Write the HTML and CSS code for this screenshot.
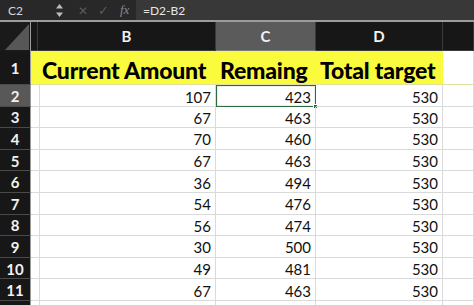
FILE: index.html
```html
<!DOCTYPE html>
<html lang="en">
<head>
    <meta charset="UTF-8">
    <title>Sheet</title>
    <link rel="stylesheet" href="styles.css">
</head>
<body>
    <div class="formula-bar">
        <div class="name-box">C2</div>
        <div class="stepper">
            <svg width="7" height="13" viewBox="0 0 7 13"><path d="M3.5 0 L7 4.5 L0 4.5 Z M3.5 13 L7 8.5 L0 8.5 Z" fill="#bdbdbd"/></svg>
        </div>
        <div class="fb-icon cancel">&#x2715;</div>
        <div class="fb-icon accept">&#x2713;</div>
        <div class="fb-icon fx">fx</div>
        <div class="formula">=D2-B2</div>
    </div>

    <div class="sheet">
        <div class="row head">
            <div class="corner"><span class="tri"></span></div>
            <div class="colhead"></div>
            <div class="colhead">B</div>
            <div class="colhead selected">C</div>
            <div class="colhead">D</div>
            <div class="colhead"></div>
        </div>
        <div class="row title">
            <div class="rownum">1</div>
            <div class="cell"></div>
            <div class="cell">Current Amount</div>
            <div class="cell">Remaing</div>
            <div class="cell">Total target</div>
            <div class="cell plain"></div>
        </div>
        <div class="row">
            <div class="rownum selected">2</div>
            <div class="cell"></div>
            <div class="cell num">107</div>
            <div class="cell num active">423<span class="handle"></span></div>
            <div class="cell num">530</div>
            <div class="cell"></div>
        </div>
        <div class="row">
            <div class="rownum">3</div><div class="cell"></div>
            <div class="cell num">67</div><div class="cell num">463</div><div class="cell num">530</div><div class="cell"></div>
        </div>
        <div class="row">
            <div class="rownum">4</div><div class="cell"></div>
            <div class="cell num">70</div><div class="cell num">460</div><div class="cell num">530</div><div class="cell"></div>
        </div>
        <div class="row">
            <div class="rownum">5</div><div class="cell"></div>
            <div class="cell num">67</div><div class="cell num">463</div><div class="cell num">530</div><div class="cell"></div>
        </div>
        <div class="row">
            <div class="rownum">6</div><div class="cell"></div>
            <div class="cell num">36</div><div class="cell num">494</div><div class="cell num">530</div><div class="cell"></div>
        </div>
        <div class="row">
            <div class="rownum">7</div><div class="cell"></div>
            <div class="cell num">54</div><div class="cell num">476</div><div class="cell num">530</div><div class="cell"></div>
        </div>
        <div class="row">
            <div class="rownum">8</div><div class="cell"></div>
            <div class="cell num">56</div><div class="cell num">474</div><div class="cell num">530</div><div class="cell"></div>
        </div>
        <div class="row">
            <div class="rownum">9</div><div class="cell"></div>
            <div class="cell num">30</div><div class="cell num">500</div><div class="cell num">530</div><div class="cell"></div>
        </div>
        <div class="row">
            <div class="rownum">10</div><div class="cell"></div>
            <div class="cell num">49</div><div class="cell num">481</div><div class="cell num">530</div><div class="cell"></div>
        </div>
        <div class="row">
            <div class="rownum">11</div><div class="cell"></div>
            <div class="cell num">67</div><div class="cell num">463</div><div class="cell num">530</div><div class="cell"></div>
        </div>
        <div class="row">
            <div class="rownum"></div><div class="cell"></div>
            <div class="cell num"></div><div class="cell num"></div><div class="cell num"></div><div class="cell"></div>
        </div>
    </div>
</body>
</html>
```

FILE: styles.css
```css
* {
    box-sizing: border-box;
}

body {
    margin: 0;
    width: 474px;
    height: 305px;
    overflow: hidden;
    background-color: #fff;
    font-family: Lato, "Open Sans", sans-serif;
}

/* formula bar */
.formula-bar {
    display: flex;
    align-items: center;
    height: 22px;
    background-color: #282828;
    border-bottom: 2px solid #9c9c9c;
    color: #d8d8d8;
    font-size: 12px;
}

.name-box {
    width: 54px;
    padding-left: 8px;
}

.stepper {
    display: flex;
    align-items: center;
    width: 20px;
    padding-left: 2px;
}

.fb-icon {
    color: #5c5c5c;
    font-size: 12px;
}

.cancel {
    margin-left: 4px;
    width: 20px;
}

.accept {
    width: 22px;
    font-size: 13px;
}

.fx {
    width: 16px;
    font-family: "Liberation Serif", serif;
    font-style: italic;
    font-size: 13px;
    color: #8a8a8a;
}

.formula {
    flex: 1;
    align-self: stretch;
    display: flex;
    align-items: center;
    padding-left: 7px;
    background-color: #383838;
    color: #e6e6e6;
}

/* grid */
.row {
    display: grid;
    grid-template-columns: 31px 7px 178px 100px 127px 31px;
    height: 21.6px;
}

.row.head {
    height: 29px;
}

.row.title {
    height: 34px;
}

.corner {
    position: relative;
    background-color: #1a1a1a;
    border-right: 1px solid #9c9c9c;
}

.tri {
    position: absolute;
    right: 1px;
    bottom: 1px;
    width: 0;
    height: 0;
    border-left: 24px solid transparent;
    border-bottom: 26px solid #575757;
}

.colhead {
    display: flex;
    align-items: center;
    justify-content: center;
    background-color: #171717;
    border-right: 1px solid #3a3a3a;
    border-bottom: 1px solid #3a3a3a;
    color: #f2f2f2;
    font-size: 15px;
    font-weight: 700;
}

.colhead.selected {
    background-color: #5b5b5b;
    border-bottom-color: #7a7a7a;
}

.rownum {
    display: flex;
    align-items: center;
    justify-content: center;
    padding-top: 1px;
    background-color: #171717;
    border-right: 1px solid #9c9c9c;
    border-bottom: 1px solid #4a4a4a;
    color: #f2f2f2;
    font-size: 15px;
    font-weight: 700;
}

.rownum.selected {
    background-color: #585858;
}

.cell {
    position: relative;
    display: flex;
    align-items: center;
    padding: 0 4px;
    border-right: 1px solid #dadada;
    border-bottom: 1px solid #dadada;
    color: #111;
    font-size: 15px;
    white-space: nowrap;
}

.cell.num {
    justify-content: flex-end;
    padding-top: 2px;
}

.title .cell {
    padding-top: 4px;
    background-color: #fbfb3d;
    border-right: none;
    border-bottom: 1px solid #e0e0a0;
    color: #000;
    font-size: 23px;
    font-weight: 900;
    letter-spacing: -0.2px;
}

.title .cell.plain {
    background-color: #fff;
    border-right: 1px solid #dadada;
}

.cell.active {
    border: 1px solid #2e6b43;
    box-shadow: inset 0 0 0 1px #e8efe9;
}

.handle {
    position: absolute;
    right: -3px;
    bottom: -3px;
    width: 5px;
    height: 5px;
    background-color: #2e6b43;
    border: 1px solid #fff;
}
```
